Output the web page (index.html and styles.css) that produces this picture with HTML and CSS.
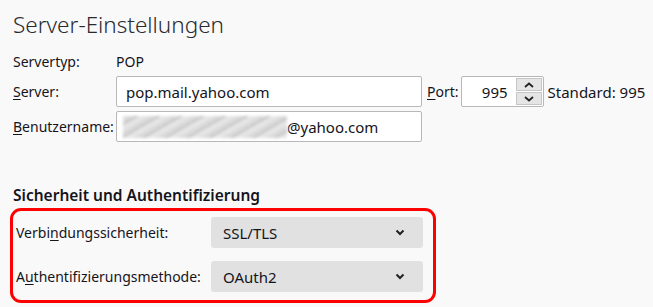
FILE: index.html
```html
<!DOCTYPE html>
<html lang="de">

<head>
    <meta charset="UTF-8">
    <meta name="viewport" content="width=device-width, initial-scale=1.0">
    <title>Server-Einstellungen</title>
    <link rel="stylesheet" href="styles.css">
</head>

<body>
    <h1 class="title">Server-Einstellungen</h1>

    <div class="server-grid">
        <span class="label">Servertyp:</span>
        <span class="value">POP</span>
        <span></span>

        <span class="label"><u>S</u>erver:</span>
        <div class="textbox">pop.mail.yahoo.com</div>
        <div class="port">
            <span class="label"><u>P</u>ort:</span>
            <div class="spin">
                <span class="spin-value">995</span>
                <div class="spin-buttons">
                    <div class="spin-btn">
                        <svg width="10" height="6" viewBox="0 0 10 6"><path d="M1 5 L5 1.5 L9 5" fill="none" stroke="#222" stroke-width="1.8"/></svg>
                    </div>
                    <div class="spin-btn">
                        <svg width="10" height="6" viewBox="0 0 10 6"><path d="M1 1 L5 4.5 L9 1" fill="none" stroke="#222" stroke-width="1.8"/></svg>
                    </div>
                </div>
            </div>
            <span class="label standard">Standard: 995</span>
        </div>

        <span class="label"><u>B</u>enutzername:</span>
        <div class="textbox user">
            <span class="blurred"></span>@yahoo.com
        </div>
        <span></span>
    </div>

    <h2 class="section">Sicherheit und Authentifizierung</h2>

    <div class="highlight">
        <div class="row">
            <span class="label row-label">Verbi<u>n</u>dungssicherheit:</span>
            <div class="select">
                <span>SSL/TLS</span>
                <svg width="10" height="7" viewBox="0 0 10 7"><path d="M1.5 1.5 L5 5 L8.5 1.5" fill="none" stroke="#222" stroke-width="2"/></svg>
            </div>
        </div>
        <div class="row">
            <span class="label row-label">A<u>u</u>thentifizierungsmethode:</span>
            <div class="select">
                <span>OAuth2</span>
                <svg width="10" height="7" viewBox="0 0 10 7"><path d="M1.5 1.5 L5 5 L8.5 1.5" fill="none" stroke="#222" stroke-width="2"/></svg>
            </div>
        </div>
    </div>
</body>

</html>
```

FILE: styles.css
```css
body {
    margin: 0;
    padding: 0 0 0 13px;
    background-color: #f9f9fa;
    color: #15141a;
    font-family: "Noto Sans", "Open Sans", sans-serif;
    font-size: 14px;
}

.title {
    margin: 0;
    padding-top: 9px;
    height: 38px;
    font-size: 22.5px;
    font-weight: 300;
    color: #2a2a2e;
}

.server-grid {
    display: grid;
    grid-template-columns: 103px 306px auto;
    grid-template-rows: 22px 31px 31px;
    row-gap: 4px;
    align-items: center;
    margin-top: 3px;
}

u {
    text-decoration-thickness: 1px;
    text-underline-offset: 2px;
}

.textbox {
    height: 31px;
    box-sizing: border-box;
    border: 1px solid #b8b8bb;
    border-radius: 2px;
    background-color: #fff;
    display: flex;
    align-items: center;
    padding-left: 9px;
    font-size: 15px;
}

.user {
    padding-left: 6px;
}

.blurred {
    display: inline-block;
    width: 164px;
    height: 22px;
    background: repeating-linear-gradient(-30deg, #e6e6e6 0 5px, #c4c4c4 5px 7px, #dadada 7px 11px);
    filter: blur(1.5px);
}

.port {
    display: flex;
    align-items: center;
    gap: 2px;
    padding-left: 5px;
}

.spin {
    width: 83px;
    height: 31px;
    box-sizing: border-box;
    border: 1px solid #b8b8bb;
    border-radius: 2px;
    background-color: #fff;
    display: flex;
    align-items: center;
    font-size: 15px;
}

.spin-value {
    flex: 1;
    text-align: right;
    padding-right: 8px;
}

.spin-buttons {
    display: flex;
    flex-direction: column;
    align-self: stretch;
    width: 26px;
    margin: 1px 1px 1px 0;
    gap: 1px;
}

.spin-btn {
    flex: 1;
    background-color: #e5e5e5;
    border: 1px solid #c6c6c8;
    display: flex;
    justify-content: center;
    align-items: center;
}

.standard {
    margin-left: 2px;
    font-size: 15px;
}

.section {
    margin: 42px 0 0 0;
    height: 24px;
    font-size: 15.5px;
    font-weight: 600;
    color: #15141a;
}

.highlight {
    width: 407px;
    margin-left: -3px;
    border: 3px solid #ff0000;
    border-radius: 11px;
    padding: 6px 10px 8px 3px;
    display: flex;
    flex-direction: column;
    gap: 13px;
}

.row {
    display: flex;
    align-items: center;
}

.row-label {
    width: 195px;
}

.select {
    width: 212px;
    height: 31px;
    border-radius: 3px;
    background-color: #e1e1e1;
    display: flex;
    align-items: center;
    justify-content: space-between;
    padding: 0 18px 0 12px;
    box-sizing: border-box;
    font-size: 15px;
}
```
